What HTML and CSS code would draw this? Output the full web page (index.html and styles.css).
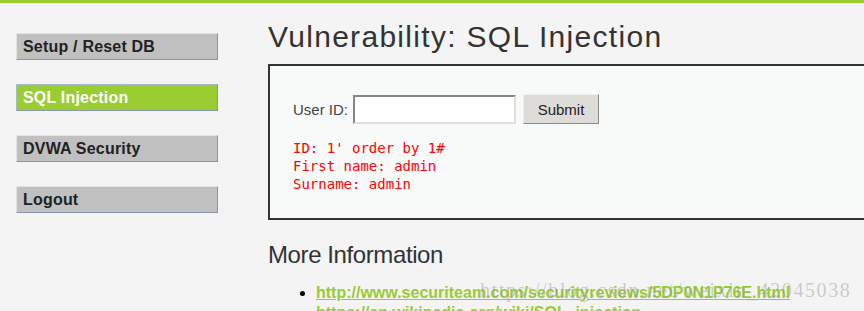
FILE: index.html
```html
<!DOCTYPE html>
<html lang="en">
  <head>
    <meta charset="UTF-8" />
    <meta name="viewport" content="width=device-width, initial-scale=1.0" />
    <title>Vulnerability: SQL Injection</title>
    <link rel="stylesheet" href="styles.css">
  </head>
  <body>
    <div class="page">
      <nav class="sidebar">
        <ul class="menu">
          <li><a href="#" class="menu-link">Setup / Reset DB</a></li>
          <li><a href="#" class="menu-link selected">SQL Injection</a></li>
          <li><a href="#" class="menu-link">DVWA Security</a></li>
          <li><a href="#" class="menu-link">Logout</a></li>
        </ul>
      </nav>

      <main class="main-body">
        <h1 class="page-title">Vulnerability: SQL Injection</h1>

        <div class="code-area">
          <form class="id-form">
            <label class="id-label" for="user-id">User ID:</label>
            <input class="id-input" type="text" id="user-id" name="id" />
            <button class="submit-button" type="button">Submit</button>
          </form>
          <pre class="result">ID: 1' order by 1#
First name: admin
Surname: admin</pre>
        </div>

        <h2 class="section-title">More Information</h2>
        <ul class="info-links">
          <li><a href="#">http://www.securiteam.com/securityreviews/5DP0N1P76E.html</a></li>
          <li><a href="#">https://en.wikipedia.org/wiki/SQL_injection</a></li>
        </ul>
      </main>
    </div>

    <div class="watermark">https://blog.csdn.net/weixin_42045038</div>
  </body>
</html>
```

FILE: styles.css
```css
* {
  box-sizing: border-box;
}

body {
  margin: 0;
  background-color: #f4f4f4;
  border-top: 3px solid #9acd32;
  font-family: "Liberation Sans", Arial, sans-serif;
  overflow: hidden;
  height: 311px;
}

.page {
  display: flex;
}

.sidebar {
  flex: 0 0 268px;
  padding: 30px 0 0 16px;
}

.menu {
  list-style: none;
  margin: 0;
  padding: 0;
  display: flex;
  flex-direction: column;
  gap: 24px;
}

.menu-link {
  display: block;
  width: 202px;
  height: 27px;
  padding-left: 6px;
  background-color: #c0c0c0;
  border: 1px solid;
  border-color: #e2e2e2 #8796ab #8796ab #e2e2e2;
  color: #222;
  font-weight: bold;
  font-size: 16px;
  line-height: 25px;
  letter-spacing: 0.2px;
  text-decoration: none;
}

.menu-link.selected {
  background-color: #9acd32;
  border-color: #a9b9d0 #8796ab #8796ab #a9b9d0;
  color: #fff;
}

.main-body {
  flex: 1;
  padding-top: 16px;
  min-width: 0;
}

.page-title {
  margin: 0 0 9px;
  font-size: 30px;
  line-height: 36px;
  font-weight: normal;
  letter-spacing: 1.3px;
  color: #333;
}

.code-area {
  width: 640px;
  height: 156px;
  padding: 28px 0 0 23px;
  background-color: #f8f9f9;
  border: 2px solid #333;
}

.id-form {
  display: flex;
  align-items: center;
  height: 30px;
}

.id-label {
  font-size: 15px;
  color: #444;
  margin-right: 5px;
}

.id-input {
  width: 163px;
  height: 29px;
  margin: 0 7px 0 0;
  background: #fff;
  border: 2px solid;
  border-color: #8a8580 #e2dfda #e2dfda #8a8580;
}

.submit-button {
  width: 76px;
  height: 30px;
  background-color: #dddcd8;
  border: 1px solid;
  border-color: #f0efec #8a8884 #8a8884 #f0efec;
  font-family: "Liberation Sans", Arial, sans-serif;
  font-size: 15px;
  color: #222;
}

.result {
  margin: 15px 0 0;
  font-family: "DejaVu Sans Mono", monospace;
  font-size: 14px;
  line-height: 18px;
  color: #ff0000;
}

.section-title {
  margin: 21px 0 0;
  font-size: 24px;
  line-height: 28px;
  font-weight: normal;
  letter-spacing: -0.4px;
  color: #333;
}

.info-links {
  margin: 14px 0 0;
  padding-left: 48px;
  font-size: 16px;
  line-height: 20px;
  font-weight: bold;
}

.info-links a {
  color: #99cc33;
}

.watermark {
  position: absolute;
  left: 480px;
  top: 279px;
  font-family: "Liberation Serif", serif;
  font-size: 20px;
  line-height: 23px;
  letter-spacing: 1.6px;
  color: rgba(150, 150, 150, 0.45);
  pointer-events: none;
}
```
